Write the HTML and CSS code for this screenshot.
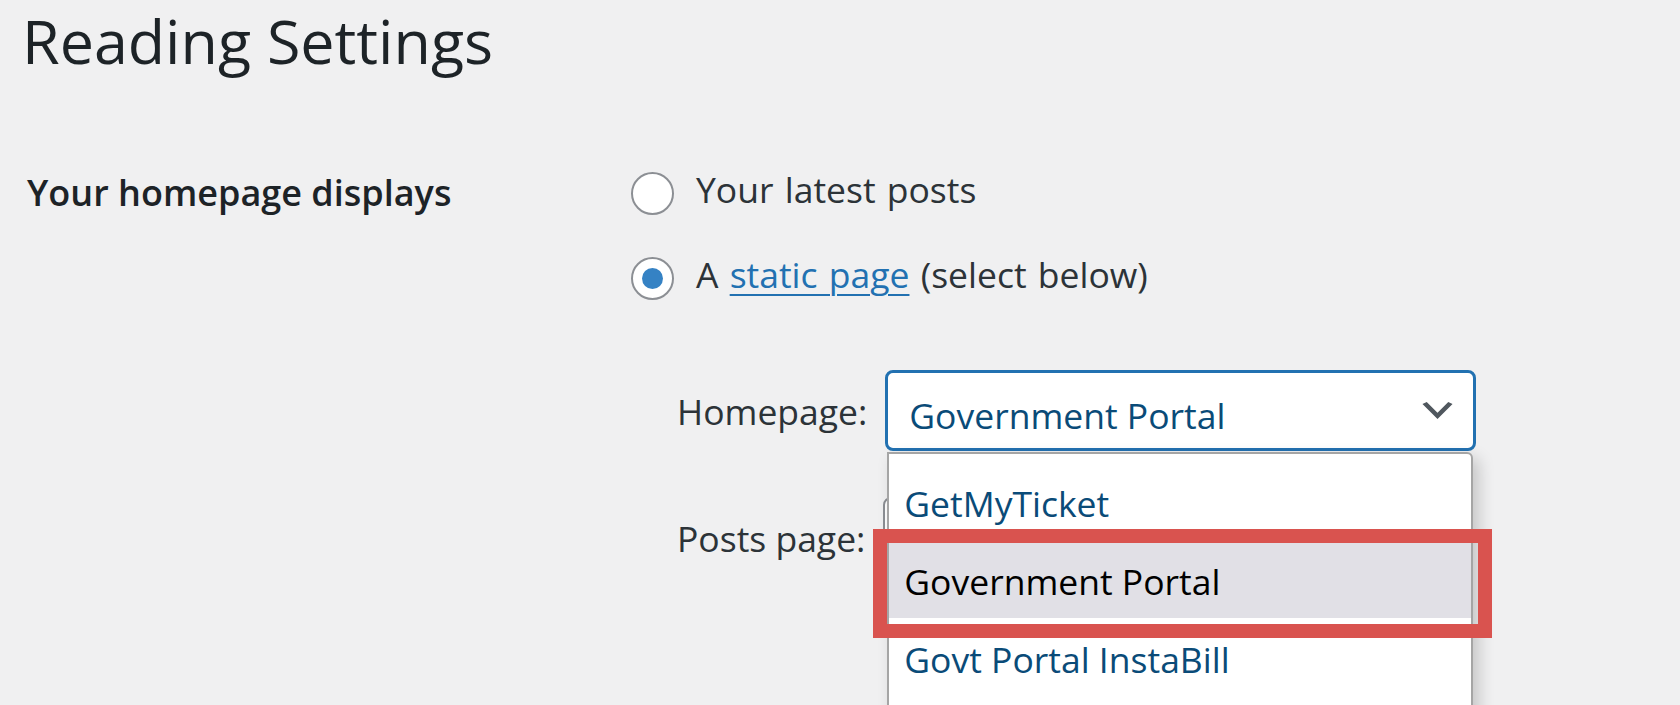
FILE: index.html
```html
<!DOCTYPE html>
<html lang="en">
<head>
<meta charset="utf-8">
<title>Reading Settings</title>
<link rel="stylesheet" href="styles.css">
</head>
<body>
<div class="wrap">
  <h1 class="page-title">Reading Settings</h1>
  <div class="form-row">
    <div class="row-label">Your homepage displays</div>
    <div class="row-field">
      <div class="radio-row">
        <span class="radio"></span>
        <span class="radio-text">Your latest posts</span>
      </div>
      <div class="radio-row second">
        <span class="radio checked"></span>
        <span class="radio-text">A <a class="link" href="#">static page</a> (select below)</span>
      </div>
      <ul class="page-selects">
        <li class="select-line">
          <span class="select-label">Homepage:</span>
          <div class="select focused">
            <span class="select-value">Government Portal</span>
            <svg class="chevron" viewBox="0 0 20 20" width="43" height="43" aria-hidden="true"><path d="M5 6l5 5 5-5 2 1-7 7-7-7 2-1z"/></svg>
            <ul class="dropdown">
              <li class="option">GetMyTicket</li>
              <li class="option hovered">Government Portal<span class="annot"></span></li>
              <li class="option">Govt Portal InstaBill</li>
            </ul>
          </div>
        </li>
        <li class="select-line posts">
          <span class="select-label">Posts page:</span>
          <div class="select behind"></div>
        </li>
      </ul>
    </div>
  </div>
</div>
</body>
</html>
```

FILE: styles.css
```css
html, body {
  margin: 0;
  padding: 0;
  height: 705px;
  overflow: hidden;
  background: #f0f0f1;
  font-family: "Open Sans", "Noto Sans", sans-serif;
  color: #2c3338;
}

.wrap {
  padding-left: 22px;
}

.page-title {
  margin: 0;
  font-size: 61px;
  font-weight: 400;
  line-height: 82px;
  color: #1d2327;
}

.form-row {
  margin-top: 83px;
  display: grid;
  grid-template-columns: 609px 1fr;
}

.row-label {
  padding: 4px 0 0 5px;
  font-size: 36px;
  font-weight: 600;
  line-height: 48px;
  color: #1d2327;
}

.radio-row {
  display: flex;
  align-items: flex-start;
  gap: 22px;
  height: 48px;
  font-size: 35.5px;
  line-height: 48px;
}

.radio-row.second {
  margin-top: 37px;
}

.radio {
  box-sizing: border-box;
  width: 43px;
  height: 43px;
  margin-top: 7px;
  border: 2px solid #8c8f94;
  border-radius: 50%;
  background: #fff;
  display: flex;
  align-items: center;
  justify-content: center;
  flex: none;
}

.radio.checked::before {
  content: "";
  width: 21px;
  height: 21px;
  border-radius: 50%;
  background: #3582c4;
}

.link {
  color: #2271b1;
  text-decoration: underline;
  text-decoration-thickness: 2px;
  text-underline-offset: 6px;
}

.radio-text {
  word-spacing: 2px;
}

.page-selects {
  list-style: none;
  margin: 72px 0 0;
  padding: 0 0 0 46px;
}

.select-line {
  display: flex;
  align-items: center;
  gap: 18px;
  font-size: 35.5px;
  line-height: 48px;
}

.select-line.posts {
  margin-top: 46px;
}

.select {
  position: relative;
  box-sizing: border-box;
  width: 591px;
  height: 81px;
  display: flex;
  align-items: center;
  padding: 0 14px 0 21px;
  background: #fff;
  border: 2px solid #8c8f94;
  border-radius: 8px;
  color: #2c3338;
}

.select.behind {
  width: 586px;
}

.select.focused {
  border: 3px solid #2271b1;
  color: #0a4b78;
}

.select-value {
  padding-top: 8px;
  flex: 1;
  white-space: nowrap;
}

.chevron {
  flex: none;
  fill: #50575e;
}

.dropdown {
  position: absolute;
  z-index: 10;
  left: -1px;
  top: 79px;
  box-sizing: border-box;
  width: 586px;
  height: 420px;
  margin: 0;
  padding: 11px 0 0;
  list-style: none;
  background: #fff;
  border: 2px solid #a5a5a5;
  border-radius: 0 6px 0 0;
  box-shadow: 6px 6px 16px rgba(0, 0, 0, 0.18);
}

.option {
  position: relative;
  box-sizing: border-box;
  height: 75px;
  margin-bottom: 3px;
  padding: 14px 0 0 15px;
  font-size: 35.5px;
  line-height: 48px;
  color: #0a4b78;
  white-space: nowrap;
}

.option.hovered {
  background: #e1e0e6;
  color: #000;
}

.annot {
  position: absolute;
  left: -16px;
  top: -14px;
  box-sizing: border-box;
  width: 619px;
  height: 109px;
  border: 14px solid #d9534f;
  pointer-events: none;
}
```
